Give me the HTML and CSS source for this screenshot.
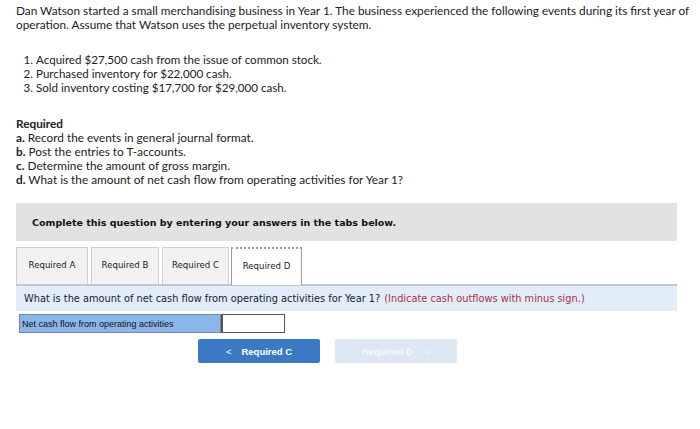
FILE: index.html
```html
<!DOCTYPE html>
<html>
<head>
<meta charset="utf-8">
<link rel="stylesheet" href="styles.css">
</head>
<body>
<div class="page">
  <p class="intro">Dan Watson started a small merchandising business in Year 1. The business experienced the following events during its first year of operation. Assume that Watson uses the perpetual inventory system.</p>
  <ol class="events">
    <li>Acquired $27,500 cash from the issue of common stock.</li>
    <li>Purchased inventory for $22,000 cash.</li>
    <li>Sold inventory costing $17,700 for $29,000 cash.</li>
  </ol>
  <div class="required">
    <div class="req-title">Required</div>
    <div><b>a.</b> Record the events in general journal format.</div>
    <div><b>b.</b> Post the entries to T-accounts.</div>
    <div><b>c.</b> Determine the amount of gross margin.</div>
    <div><b>d.</b> What is the amount of net cash flow from operating activities for Year 1?</div>
  </div>
  <div class="complete">Complete this question by entering your answers in the tabs below.</div>
  <div class="tabs">
    <div class="tab tab-a">Required A</div>
    <div class="tab tab-b">Required B</div>
    <div class="tab tab-c">Required C</div>
    <div class="tab tab-d active">Required D</div>
  </div>
  <div class="question">What is the amount of net cash flow from operating activities for Year 1? <span class="hint">(Indicate cash outflows with minus sign.)</span></div>
  <div class="answer-row">
    <div class="label">Net cash flow from operating activities</div>
    <div class="input"></div>
  </div>
  <div class="nav">
    <div class="btn prev"><span class="chev">&lt;</span>Required C</div>
    <div class="btn next">Required D<span class="chev">&gt;</span></div>
  </div>
</div>
</body>
</html>
```
FILE: styles.css
```css
html, body {
  margin: 0;
  padding: 0;
  background: #fff;
}
.page {
  padding: 4px 6px 0 16px;
  font-family: "Lato", "Open Sans", sans-serif;
  font-size: 11.8px;
  color: #222;
}
.intro {
  margin: 0;
  line-height: 14px;
}
.events {
  margin: 21px 0 0 0;
  padding-left: 20px;
  font-size: 11.6px;
  line-height: 14px;
}
.required {
  margin-top: 22px;
  line-height: 14px;
}
.req-title {
  font-weight: bold;
}
.complete {
  margin-top: 16px;
  width: 661px;
  height: 38px;
  box-sizing: border-box;
  background: #e2e2e2;
  font-family: "DejaVu Sans", Verdana, sans-serif;
  font-weight: bold;
  font-size: 9.5px;
  color: #111;
  padding: 0 0 0 16px;
  display: flex;
  align-items: center;
}
.tabs {
  display: flex;
  margin-top: 6px;
  height: 37px;
  align-items: flex-end;
}
.tab {
  box-sizing: border-box;
  height: 37px;
  display: flex;
  align-items: center;
  justify-content: center;
  padding-bottom: 2px;
  background: #f2f2f2;
  border: 1px solid #d0d0d0;
  border-bottom: none;
  font-family: "DejaVu Sans", Verdana, sans-serif;
  font-size: 8.6px;
  color: #222;
}
.tab-a { width: 72px; }
.tab-b { width: 68px; margin-left: 3px; }
.tab-c { width: 67px; margin-left: 3px; }
.tab-d { width: 71px; margin-left: 2px; }
.tab.active {
  background: #fff;
  border: 1px solid #9a9ea6;
  border-top: 2px dotted #9a9ea6;
  border-bottom: none;
  height: 38px;
  margin-bottom: -1px;
  position: relative;
}
.question {
  width: 661px;
  box-sizing: border-box;
  height: 27px;
  background: #e1edf9;
  border-top: 2px solid #c3c7cc;
  padding: 0 0 0 8px;
  display: flex;
  align-items: center;
  font-family: "DejaVu Sans", Verdana, sans-serif;
  font-size: 9.8px;
  color: #222;
  white-space: nowrap;
}
.hint {
  color: #b0303c;
  margin-left: 4px;
}
.answer-row {
  display: flex;
  margin: 3px 0 0 3px;
  height: 19px;
}
.label {
  box-sizing: border-box;
  width: 202px;
  background: #8cb6ea;
  border: 1px solid #7a8694;
  font-family: "Liberation Sans", Arial, sans-serif;
  font-size: 9px;
  color: #111;
  padding: 0 0 0 2px;
  display: flex;
  align-items: center;
}
.input {
  box-sizing: border-box;
  width: 64px;
  background: #fff;
  border: 1px solid #555;
  border-left: 2px solid #555;
}
.nav {
  display: flex;
  gap: 15px;
  margin: 6px 0 0 182px;
}
.btn {
  box-sizing: border-box;
  width: 122px;
  height: 24px;
  border-radius: 2px;
  display: flex;
  align-items: center;
  justify-content: center;
  font-family: "Liberation Sans", Arial, sans-serif;
  font-weight: bold;
  font-size: 9.5px;
}
.btn.prev {
  background: #3b79c4;
  color: #fff;
}
.btn.prev .chev {
  margin-right: 10px;
  font-weight: normal;
}
.btn.next {
  background: #dde7f4;
  color: #f4f7fb;
}
.btn.next .chev {
  margin-left: 12px;
  font-weight: normal;
}
```
